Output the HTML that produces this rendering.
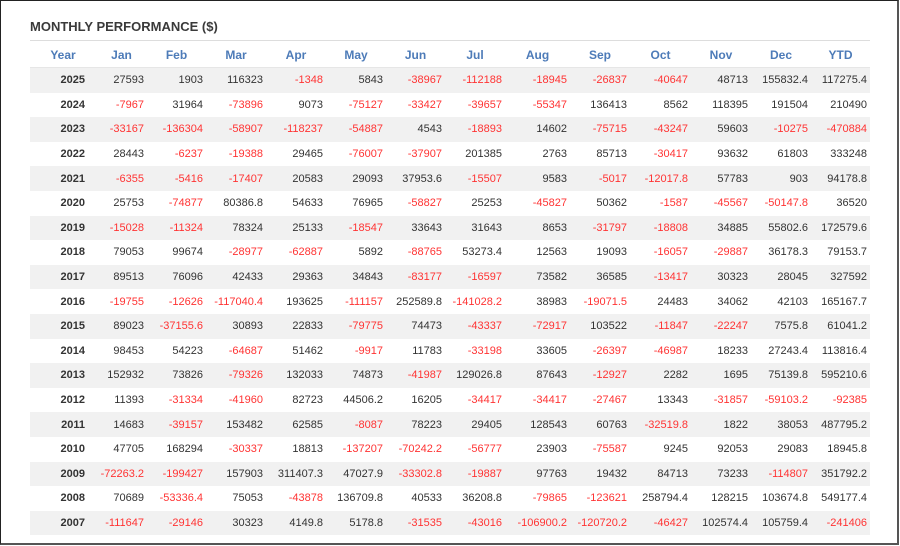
<!DOCTYPE html>
<html><head><meta charset="utf-8"><style>
html,body{margin:0;padding:0;background:#fff}
body{width:900px;height:546px;position:relative;overflow:hidden;font-family:"Liberation Sans",Arial,sans-serif}
.frame{position:absolute;left:0;top:0;width:896px;height:542px;border:1px solid #222;border-right:2px solid #555;border-bottom:2px solid #555}
h1{position:absolute;left:30px;top:19px;margin:0;font-size:13px;font-weight:bold;color:#3a3a3a;letter-spacing:0}
.line{position:absolute;left:30px;top:40px;width:840px;height:1px;background:#ddd}
table{position:absolute;left:30px;top:42px;width:840px;border-collapse:collapse;table-layout:fixed}
th{height:25px;font-size:12px;color:#4d7bb8;font-weight:bold;text-align:center;padding:0;border-bottom:1px solid #e6e6e6}
td{height:24.6px;font-size:11px;color:#333;text-align:right;padding:0 3px 0 0;white-space:nowrap}
td.y{font-weight:bold;padding-right:11px}
tr:nth-child(even) td{background:#f1f1f1}
.r{color:#f33}
</style></head><body>
<div class="frame"></div>
<h1>MONTHLY PERFORMANCE ($)</h1>
<div class="line"></div>
<table>
<colgroup><col style="width:66px"><col style="width:51px"><col style="width:59px"><col style="width:60px"><col style="width:60px"><col style="width:60px"><col style="width:59px"><col style="width:60px"><col style="width:65px"><col style="width:60px"><col style="width:61px"><col style="width:60px"><col style="width:60px"><col style="width:59px"></colgroup>
<tr><th>Year</th><th>Jan</th><th>Feb</th><th>Mar</th><th>Apr</th><th>May</th><th>Jun</th><th>Jul</th><th>Aug</th><th>Sep</th><th>Oct</th><th>Nov</th><th>Dec</th><th>YTD</th></tr>
<tr><td class="y">2025</td><td>27593</td><td>1903</td><td>116323</td><td class="r">-1348</td><td>5843</td><td class="r">-38967</td><td class="r">-112188</td><td class="r">-18945</td><td class="r">-26837</td><td class="r">-40647</td><td>48713</td><td>155832.4</td><td>117275.4</td></tr>
<tr><td class="y">2024</td><td class="r">-7967</td><td>31964</td><td class="r">-73896</td><td>9073</td><td class="r">-75127</td><td class="r">-33427</td><td class="r">-39657</td><td class="r">-55347</td><td>136413</td><td>8562</td><td>118395</td><td>191504</td><td>210490</td></tr>
<tr><td class="y">2023</td><td class="r">-33167</td><td class="r">-136304</td><td class="r">-58907</td><td class="r">-118237</td><td class="r">-54887</td><td>4543</td><td class="r">-18893</td><td>14602</td><td class="r">-75715</td><td class="r">-43247</td><td>59603</td><td class="r">-10275</td><td class="r">-470884</td></tr>
<tr><td class="y">2022</td><td>28443</td><td class="r">-6237</td><td class="r">-19388</td><td>29465</td><td class="r">-76007</td><td class="r">-37907</td><td>201385</td><td>2763</td><td>85713</td><td class="r">-30417</td><td>93632</td><td>61803</td><td>333248</td></tr>
<tr><td class="y">2021</td><td class="r">-6355</td><td class="r">-5416</td><td class="r">-17407</td><td>20583</td><td>29093</td><td>37953.6</td><td class="r">-15507</td><td>9583</td><td class="r">-5017</td><td class="r">-12017.8</td><td>57783</td><td>903</td><td>94178.8</td></tr>
<tr><td class="y">2020</td><td>25753</td><td class="r">-74877</td><td>80386.8</td><td>54633</td><td>76965</td><td class="r">-58827</td><td>25253</td><td class="r">-45827</td><td>50362</td><td class="r">-1587</td><td class="r">-45567</td><td class="r">-50147.8</td><td>36520</td></tr>
<tr><td class="y">2019</td><td class="r">-15028</td><td class="r">-11324</td><td>78324</td><td>25133</td><td class="r">-18547</td><td>33643</td><td>31643</td><td>8653</td><td class="r">-31797</td><td class="r">-18808</td><td>34885</td><td>55802.6</td><td>172579.6</td></tr>
<tr><td class="y">2018</td><td>79053</td><td>99674</td><td class="r">-28977</td><td class="r">-62887</td><td>5892</td><td class="r">-88765</td><td>53273.4</td><td>12563</td><td>19093</td><td class="r">-16057</td><td class="r">-29887</td><td>36178.3</td><td>79153.7</td></tr>
<tr><td class="y">2017</td><td>89513</td><td>76096</td><td>42433</td><td>29363</td><td>34843</td><td class="r">-83177</td><td class="r">-16597</td><td>73582</td><td>36585</td><td class="r">-13417</td><td>30323</td><td>28045</td><td>327592</td></tr>
<tr><td class="y">2016</td><td class="r">-19755</td><td class="r">-12626</td><td class="r">-117040.4</td><td>193625</td><td class="r">-111157</td><td>252589.8</td><td class="r">-141028.2</td><td>38983</td><td class="r">-19071.5</td><td>24483</td><td>34062</td><td>42103</td><td>165167.7</td></tr>
<tr><td class="y">2015</td><td>89023</td><td class="r">-37155.6</td><td>30893</td><td>22833</td><td class="r">-79775</td><td>74473</td><td class="r">-43337</td><td class="r">-72917</td><td>103522</td><td class="r">-11847</td><td class="r">-22247</td><td>7575.8</td><td>61041.2</td></tr>
<tr><td class="y">2014</td><td>98453</td><td>54223</td><td class="r">-64687</td><td>51462</td><td class="r">-9917</td><td>11783</td><td class="r">-33198</td><td>33605</td><td class="r">-26397</td><td class="r">-46987</td><td>18233</td><td>27243.4</td><td>113816.4</td></tr>
<tr><td class="y">2013</td><td>152932</td><td>73826</td><td class="r">-79326</td><td>132033</td><td>74873</td><td class="r">-41987</td><td>129026.8</td><td>87643</td><td class="r">-12927</td><td>2282</td><td>1695</td><td>75139.8</td><td>595210.6</td></tr>
<tr><td class="y">2012</td><td>11393</td><td class="r">-31334</td><td class="r">-41960</td><td>82723</td><td>44506.2</td><td>16205</td><td class="r">-34417</td><td class="r">-34417</td><td class="r">-27467</td><td>13343</td><td class="r">-31857</td><td class="r">-59103.2</td><td class="r">-92385</td></tr>
<tr><td class="y">2011</td><td>14683</td><td class="r">-39157</td><td>153482</td><td>62585</td><td class="r">-8087</td><td>78223</td><td>29405</td><td>128543</td><td>60763</td><td class="r">-32519.8</td><td>1822</td><td>38053</td><td>487795.2</td></tr>
<tr><td class="y">2010</td><td>47705</td><td>168294</td><td class="r">-30337</td><td>18813</td><td class="r">-137207</td><td class="r">-70242.2</td><td class="r">-56777</td><td>23903</td><td class="r">-75587</td><td>9245</td><td>92053</td><td>29083</td><td>18945.8</td></tr>
<tr><td class="y">2009</td><td class="r">-72263.2</td><td class="r">-199427</td><td>157903</td><td>311407.3</td><td>47027.9</td><td class="r">-33302.8</td><td class="r">-19887</td><td>97763</td><td>19432</td><td>84713</td><td>73233</td><td class="r">-114807</td><td>351792.2</td></tr>
<tr><td class="y">2008</td><td>70689</td><td class="r">-53336.4</td><td>75053</td><td class="r">-43878</td><td>136709.8</td><td>40533</td><td>36208.8</td><td class="r">-79865</td><td class="r">-123621</td><td>258794.4</td><td>128215</td><td>103674.8</td><td>549177.4</td></tr>
<tr><td class="y">2007</td><td class="r">-111647</td><td class="r">-29146</td><td>30323</td><td>4149.8</td><td>5178.8</td><td class="r">-31535</td><td class="r">-43016</td><td class="r">-106900.2</td><td class="r">-120720.2</td><td class="r">-46427</td><td>102574.4</td><td>105759.4</td><td class="r">-241406</td></tr>
</table>
</body></html>
